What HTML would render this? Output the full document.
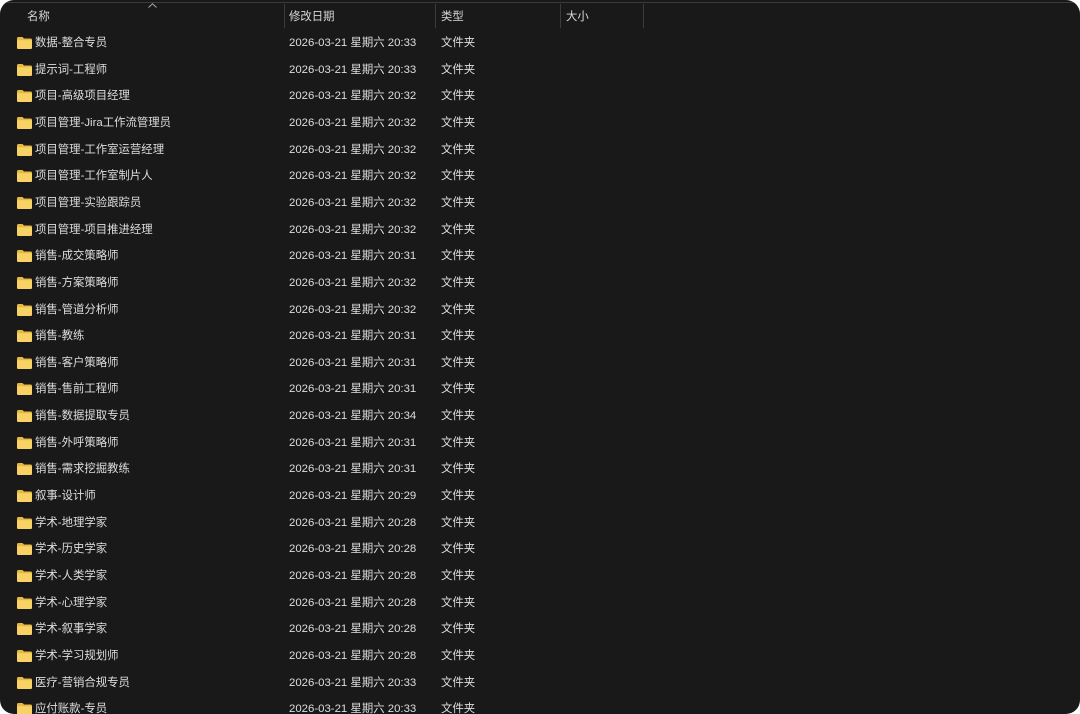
<!DOCTYPE html>
<html><head><meta charset="utf-8"><style>
html,body{margin:0;padding:0;background:#fff;}
.win{position:absolute;left:0;top:0;width:1080px;height:714px;background:#191919;border-radius:14px;overflow:hidden;font-family:"Liberation Sans","Noto Sans CJK SC",sans-serif;font-size:11.4px;color:#dedede;}
.topline{position:absolute;left:0;right:0;top:2px;height:1px;background:#3a3a3a;}
.hd{position:absolute;top:8px;color:#d8d8d8;}
.div{position:absolute;top:4px;height:24px;width:1px;background:#3c3c3c;}
.row{position:absolute;left:0;height:20px;width:1080px;}
.row span{position:absolute;top:0;line-height:20px;white-space:nowrap;}
.ic{position:absolute;left:17px;top:4px;}
.arrow{position:absolute;left:148px;top:3px;width:9px;height:5px;}
</style></head><body><div class="win">
<div class="topline"></div>
<svg class="arrow" viewBox="0 0 9 5"><path d="M0.5 4.5L4.5 0.8L8.5 4.5" fill="none" stroke="#aaa" stroke-width="1"/></svg>
<div class="hd" style="left:27px">名称</div>
<div class="div" style="left:284px"></div>
<div class="hd" style="left:289px">修改日期</div>
<div class="div" style="left:435px"></div>
<div class="hd" style="left:441px">类型</div>
<div class="div" style="left:560px"></div>
<div class="hd" style="left:566px">大小</div>
<div class="div" style="left:643px"></div>
<div id="rows"></div>
</div>
<script>
var d=[["数据-整合专员","20:33"],["提示词-工程师","20:33"],["项目-高级项目经理","20:32"],["项目管理-Jira工作流管理员","20:32"],["项目管理-工作室运营经理","20:32"],["项目管理-工作室制片人","20:32"],["项目管理-实验跟踪员","20:32"],["项目管理-项目推进经理","20:32"],["销售-成交策略师","20:31"],["销售-方案策略师","20:32"],["销售-管道分析师","20:32"],["销售-教练","20:31"],["销售-客户策略师","20:31"],["销售-售前工程师","20:31"],["销售-数据提取专员","20:34"],["销售-外呼策略师","20:31"],["销售-需求挖掘教练","20:31"],["叙事-设计师","20:29"],["学术-地理学家","20:28"],["学术-历史学家","20:28"],["学术-人类学家","20:28"],["学术-心理学家","20:28"],["学术-叙事学家","20:28"],["学术-学习规划师","20:28"],["医疗-营销合规专员","20:33"],["应付账款-专员","20:33"]];
var h='';var icon='<svg class="ic" width="15" height="12" viewBox="0 0 15 12"><path d="M0 1.5Q0 0 1.5 0H5.5L7 1.5H13.5Q15 1.5 15 3V10.5Q15 12 13.5 12H1.5Q0 12 0 10.5Z" fill="#e8b845"/><path d="M0 3.2H15V10.5Q15 12 13.5 12H1.5Q0 12 0 10.5Z" fill="#f8d265"/></svg>';
d.forEach(function(r,i){var y=33+i*26.65;h+='<div class="row" style="top:'+y.toFixed(1)+'px">'+icon+'<span style="left:35px">'+r[0]+'</span><span style="left:289px">2026-03-21 星期六 '+r[1]+'</span><span style="left:441px">文件夹</span></div>';});
document.getElementById('rows').innerHTML=h;
</script>
</body></html>
